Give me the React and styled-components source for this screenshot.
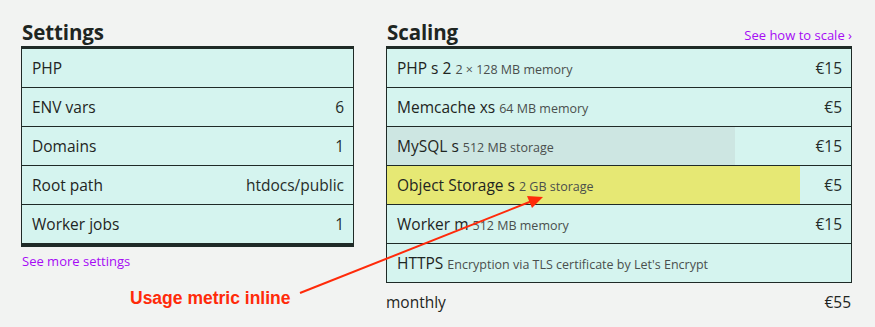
import styled, { createGlobalStyle } from "styled-components";

const GlobalStyle = createGlobalStyle`
  html, body {
    margin: 0;
    padding: 0;
    background: #f2f3f2;
  }
  body {
    font-family: "Open Sans", "Noto Sans", sans-serif;
    color: #1e2522;
  }
`;

const Page = styled.div`
  position: relative;
  width: 875px;
  height: 327px;
  box-sizing: border-box;
  padding: 18px 23px 0 21px;
  display: flex;
  gap: 32px;
  overflow: hidden;
`;

const Column = styled.section`
  display: flex;
  flex-direction: column;
  width: ${({ width }) => width};
  flex: ${({ grow }) => (grow ? 1 : "none")};
`;

const Header = styled.div`
  display: flex;
  align-items: baseline;
  justify-content: space-between;
  height: 28px;
  padding-left: 1px;
`;

const Title = styled.h2`
  margin: 0;
  font-size: 20.5px;
  line-height: 28px;
  font-weight: 700;
  letter-spacing: -0.1px;
`;

const Link = styled.a`
  font-size: 13px;
  color: #a60af5;
  text-decoration: none;
  cursor: pointer;
`;

const Panel = styled.div`
  border: 1px solid #1f2a27;
  border-top: 3px solid #1f2a27;
  border-bottom: ${({ heavyBottom }) =>
    heavyBottom ? "4px solid #1f2a27" : "1px solid #1f2a27"};
  background: #d5f4ef;
`;

const Row = styled.div`
  position: relative;
  height: 38px;
  display: flex;
  align-items: center;
  justify-content: space-between;
  padding: 0 9px 0 10px;
  & + & {
    border-top: 1px solid #1f2a27;
  }
`;

const Usage = styled.div`
  position: absolute;
  left: 0;
  top: 0;
  bottom: 0;
  background: ${({ tone }) => (tone === "warn" ? "#e6e874" : "#cde6e2")};
`;

const Name = styled.span`
  position: relative;
  font-size: 15.5px;
  color: #1e2522;
  white-space: nowrap;
`;

const Detail = styled.span`
  font-size: 12.5px;
  color: #4a4f4d;
  margin-left: 4px;
`;

const Value = styled.span`
  position: relative;
  font-size: 15.5px;
  color: #262d2a;
`;

const Footnote = styled.div`
  margin-top: 4px;
  padding-left: 1px;
  line-height: 18px;
`;

const Total = styled.div`
  display: flex;
  justify-content: space-between;
  align-items: center;
  height: 38px;
  padding-right: 1px;
  font-size: 15.5px;
`;

const Annotation = styled.div`
  position: absolute;
  left: 130px;
  top: 288px;
  font-family: "Liberation Sans", Arial, sans-serif;
  font-weight: 700;
  font-size: 17.5px;
  color: #ff2a0a;
`;

const Arrow = styled.svg`
  position: absolute;
  left: 0;
  top: 0;
  pointer-events: none;
`;

const settings = [
  { name: "PHP" },
  { name: "ENV vars", value: "6" },
  { name: "Domains", value: "1" },
  { name: "Root path", value: "htdocs/public" },
  { name: "Worker jobs", value: "1" },
];

const services = [
  { name: "PHP s 2", detail: "2 × 128 MB memory", price: "€15" },
  { name: "Memcache xs", detail: "64 MB memory", price: "€5" },
  { name: "MySQL s", detail: "512 MB storage", price: "€15", usage: 75 },
  { name: "Object Storage s", detail: "2 GB storage", price: "€5", usage: 89, tone: "warn" },
  { name: "Worker m", detail: "512 MB memory", price: "€15" },
  { name: "HTTPS", detail: "Encryption via TLS certificate by Let's Encrypt" },
];

export default function App() {
  return (
    <>
      <GlobalStyle />
      <Page>
        <Column width="333px">
          <Header>
            <Title>Settings</Title>
          </Header>
          <Panel heavyBottom>
            {settings.map((s) => (
              <Row key={s.name}>
                <Name>{s.name}</Name>
                {s.value && <Value>{s.value}</Value>}
              </Row>
            ))}
          </Panel>
          <Footnote>
            <Link>See more settings</Link>
          </Footnote>
        </Column>

        <Column grow>
          <Header>
            <Title>Scaling</Title>
            <Link>See how to scale ›</Link>
          </Header>
          <Panel>
            {services.map((s) => (
              <Row key={s.name}>
                {s.usage && <Usage tone={s.tone} style={{ width: `${s.usage}%` }} />}
                <Name>
                  {s.name}
                  <Detail>{s.detail}</Detail>
                </Name>
                {s.price && <Value>{s.price}</Value>}
              </Row>
            ))}
          </Panel>
          <Total>
            <span>monthly</span>
            <span>€55</span>
          </Total>
        </Column>

        <Annotation>Usage metric inline</Annotation>
        <Arrow width="875" height="327" viewBox="0 0 875 327">
          <line x1="300" y1="293" x2="532" y2="201" stroke="#ff2a0a" strokeWidth="2" />
          <polygon points="543,197 527,196 532,208" fill="#ff2a0a" />
        </Arrow>
      </Page>
    </>
  );
}
